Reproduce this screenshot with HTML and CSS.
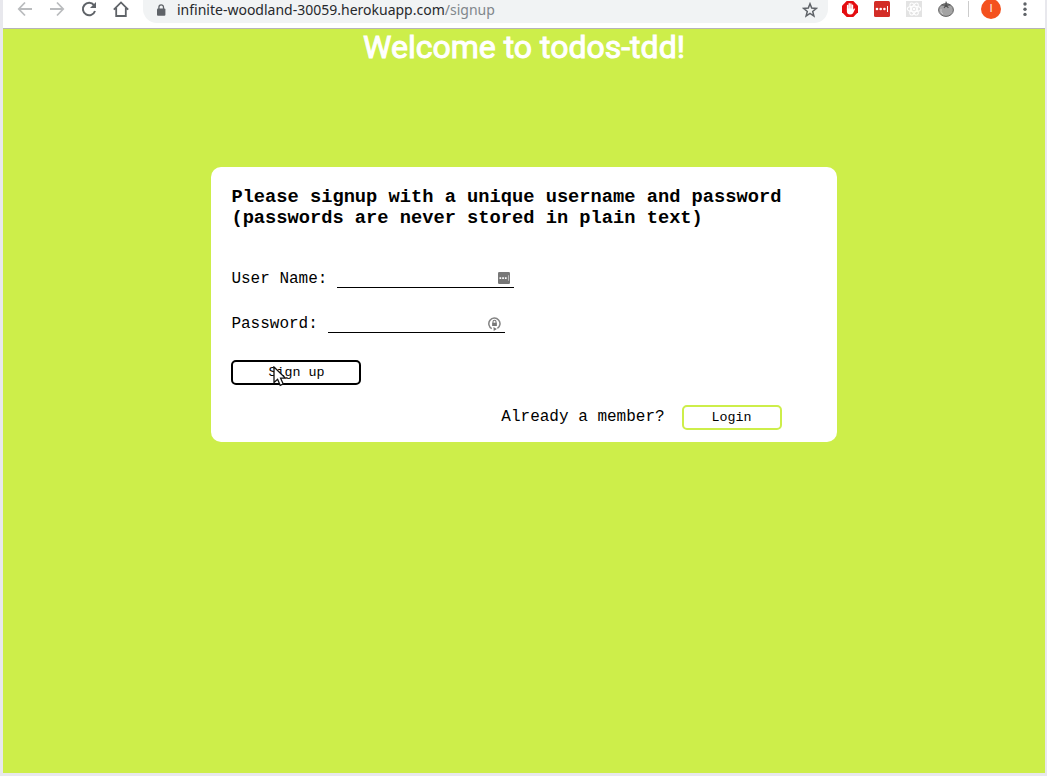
FILE: index.html
```html
<!DOCTYPE html>
<html lang="en">
<head>
<meta charset="utf-8">
<title>todos-tdd</title>
<link rel="stylesheet" href="styles.css">
</head>
<body>
<div class="window">
  <header class="toolbar">
    <nav class="nav">
      <button class="tool faded" aria-label="Back"><svg width="16" height="16" viewBox="0 0 16 16" fill="none" stroke="currentColor" stroke-width="1.8"><path d="M15 8H2M8 1.5 1.8 8 8 14.5"/></svg></button>
      <button class="tool faded" aria-label="Forward"><svg width="16" height="16" viewBox="0 0 16 16" fill="none" stroke="currentColor" stroke-width="1.8"><path d="M1 8h13M8 1.5 14.2 8 8 14.5"/></svg></button>
      <button class="tool" aria-label="Reload"><svg width="16" height="16" viewBox="0 0 16 16"><path d="M13 4.2A6.2 6.2 0 1 0 14 10" fill="none" stroke="currentColor" stroke-width="2"/><path d="M15 1v6H9z" fill="currentColor"/></svg></button>
      <button class="tool" aria-label="Home"><svg width="16" height="16" viewBox="0 0 16 16" fill="none" stroke="currentColor" stroke-width="1.8"><path d="M.8 8.6 8 1.4l7.2 7.2M3.2 7v8h9.6V7"/></svg></button>
    </nav>
    <div class="address">
      <svg width="10" height="12" viewBox="0 0 10 12"><rect x="1" y="4.5" width="8.4" height="7.2" rx="1" fill="#5f6368"/><path d="M2.9 5V3.2a2.3 2.3 0 0 1 4.6 0V5" fill="none" stroke="#5f6368" stroke-width="1.3"/></svg>
      <span class="url">infinite-woodland-30059.herokuapp.com<span class="path">/signup</span></span>
      <button class="tool" aria-label="Bookmark"><svg width="16" height="16" viewBox="0 0 16 16" fill="none" stroke="currentColor" stroke-width="1.5"><path d="m8 1.8 1.7 4.3 4.6.3-3.6 3 1.2 4.6L8 11.4 4.1 14l1.2-4.6-3.6-3 4.6-.3z"/></svg></button>
    </div>
    <div class="extensions">
      <button class="tool" aria-label="Ad blocker"><svg width="16" height="16" viewBox="0 0 16 16"><path d="M4.7 0h6.6L16 4.7v6.6L11.3 16H4.7L0 11.3V4.7z" fill="#e40d10"/><path d="M5.6 9V4.4M7.2 8V2.8M8.9 8V3M10.5 9V4.2" stroke="#fff" stroke-width="1.4" stroke-linecap="round"/><path d="M4.9 7.5h6.3v1.2l1.1-1.3.9.4-2.2 4.4q-1 1.3-3 1.3-3 0-3.1-3z" fill="#fff"/></svg></button>
      <button class="tool" aria-label="Password manager"><svg width="16" height="16" viewBox="0 0 16 16"><rect width="16" height="16" rx="1.5" fill="#d32d27"/><g fill="#fff"><circle cx="3" cy="8" r="1.3"/><circle cx="6.7" cy="8" r="1.3"/><circle cx="10.4" cy="8" r="1.3"/><path d="M13 5h1v6h-1z"/></g></svg></button>
      <button class="tool" aria-label="React tools"><svg width="16" height="16" viewBox="0 0 16 16"><path d="M0 0h16v16H0z" fill="#e3e3e3"/><g fill="none" stroke="#fff" stroke-width="1.1"><ellipse cx="8" cy="8" rx="6.7" ry="2.7"/><ellipse cx="8" cy="8" rx="6.7" ry="2.7" transform="rotate(60 8 8)"/><ellipse cx="8" cy="8" rx="6.7" ry="2.7" transform="rotate(120 8 8)"/></g><circle cx="8" cy="8" r="1.3" fill="#fff"/></svg></button>
      <button class="tool" aria-label="Tomato timer"><svg width="16" height="16" viewBox="0 0 16 16"><ellipse cx="8" cy="9" rx="7.4" ry="6.4" fill="#a4a4a4" stroke="#626262" stroke-width="1"/><path d="M3 8q-.8 3 1.8 5" fill="none" stroke="#ccc"/><path d="M8.2.6 8 4M8 4.2 3.6 4M8 4.2l4.2-.4M8 4.2 6 7M8 4.2l2.4 2.6" fill="none" stroke="#505050" stroke-width="1.2"/></svg></button>
      <span class="divider"></span>
      <button class="avatar" aria-label="Profile">I</button>
      <button class="tool" aria-label="Menu"><svg width="16" height="16" viewBox="0 0 16 16" fill="currentColor"><circle cx="8" cy="3" r="1.7"/><circle cx="8" cy="8.2" r="1.7"/><circle cx="8" cy="13.4" r="1.7"/></svg></button>
    </div>
  </header>
  <main class="page">
    <h1 class="title">Welcome to todos-tdd!</h1>
    <form class="card">
      <h3 class="prompt">Please signup with a unique username and password (passwords are never stored in plain text)</h3>
      <div class="row">
        <label for="username">User Name:</label>
        <span class="field"><input id="username" type="text"><svg class="hint" width="12" height="12" viewBox="0 0 12 12"><rect width="12" height="12" rx="1.3" fill="#777"/><path d="M1.5 5.2h1.7v1.7H1.5zM4.2 5.2h1.7v1.7H4.2zM6.9 5.2h1.7v1.7H6.9z" fill="#fff"/><path d="M10 3.3h1v5.5h-1z" fill="#bbb"/></svg></span>
      </div>
      <div class="row">
        <label for="password">Password:</label>
        <span class="field"><input id="password" type="password"><svg class="hint" width="13" height="14" viewBox="0 0 12 13"><path d="M3.5 10.8a5.2 5.2 0 1 1 5.2-.2" fill="none" stroke="#858585" stroke-width="1.4"/><path d="M3.8 5.4h4.4v3H3.8zM5 9.4l3.2 1.7L5.3 13z" fill="#777"/><path d="M4.6 5.5V4.4a1.4 1.4 0 0 1 2.8 0v1.1" fill="none" stroke="#777"/></svg></span>
      </div>
      <div class="submit">
        <button type="button" class="button signup">Sign up</button>
        <svg class="cursor" width="14" height="21" viewBox="0 0 14 21"><path d="M1 1v15.5l3.6-3.2 2.6 6 3-1.3-2.6-5.8h5z" fill="#fff" stroke="#111" stroke-width="1.3"/></svg>
      </div>
      <div class="member">
        <span>Already a member?</span>
        <button type="button" class="button login">Login</button>
      </div>
    </form>
  </main>
</div>
</body>
</html>
```
FILE: styles.css
```css
* { box-sizing: border-box; }
body { margin: 0; background: #e8e8ed; }
button { padding: 0; cursor: pointer; }
svg { display: block; flex: none; }

.window {
  display: flex;
  flex-direction: column;
  min-height: 100vh;
  padding: 0 2px 3px 3px;
}

.toolbar {
  display: flex;
  align-items: flex-start;
  height: 29px;
  padding: 0 13px 0 14px;
  background: #fff;
  border-bottom: 1px solid #b6b4b6;
}
.nav { display: flex; gap: 16px; padding-top: 1px; }
.tool { display: block; border: 0; background: none; color: #5f6368; }
.faded { color: #babcbe; }
.address {
  flex: 1;
  display: flex;
  align-items: center;
  height: 23px;
  margin: 0 14px;
  padding: 0 10px 4px 13px;
  border-radius: 0 0 14px 14px;
  background: #f1f3f4;
}
.url {
  flex: 1;
  margin-left: 11px;
  font: 14px/18px "Noto Sans", sans-serif;
  color: #27292c;
}
.path { color: #80868b; }
.extensions { display: flex; align-items: center; gap: 16px; height: 18px; margin-right: -1px; }
.extensions .divider { width: 1px; height: 16px; margin-right: -4px; margin-left: -2px; background: #ccc; }
.avatar {
  width: 20px;
  height: 20px;
  border: 0;
  border-radius: 50%;
  background: #f4511e;
  color: #fff;
  font: 10px/20px Roboto, sans-serif;
}

.page { flex: 1; background: #cdee4a; }
.title {
  margin: 0;
  font: 400 32px/36px Roboto, sans-serif;
  -webkit-text-stroke: 1px #fff;
  text-align: center;
  color: #fff;
}
.card {
  width: 60%;
  min-width: 600px;
  margin: 102px auto 0;
  padding: 20px 20px 12px;
  border-radius: 10px;
  background: #fff;
  font-family: "Liberation Mono", monospace;
  font-size: 16px;
  line-height: 21px;
}
.prompt { margin: 0 0 40px; line-height: 21px; }
.row { display: flex; align-items: flex-start; gap: 10px; margin-bottom: 24px; }
.field { display: flex; position: relative; }
.field input {
  width: 177px;
  height: 19px;
  margin-bottom: 2px;
  padding: 0;
  border: 0;
  border-bottom: 1px solid #000;
  outline: 0;
  background: none;
}
.hint { position: absolute; top: 3px; right: 4px; }
.submit { position: relative; display: flex; padding-top: 1px; margin-bottom: 20px; }
.button {
  height: 25px;
  border: 2px solid #000;
  border-radius: 5px;
  background: #fff;
  color: #000;
  font-family: "Liberation Mono", monospace;
}
.signup { width: 130px; }
.cursor { position: absolute; top: 7px; left: 42px; }
.member { display: flex; align-items: center; justify-content: flex-end; gap: 17px; padding-right: 35px; }
.login { width: 100px; border-color: #cdee4a; }
```
